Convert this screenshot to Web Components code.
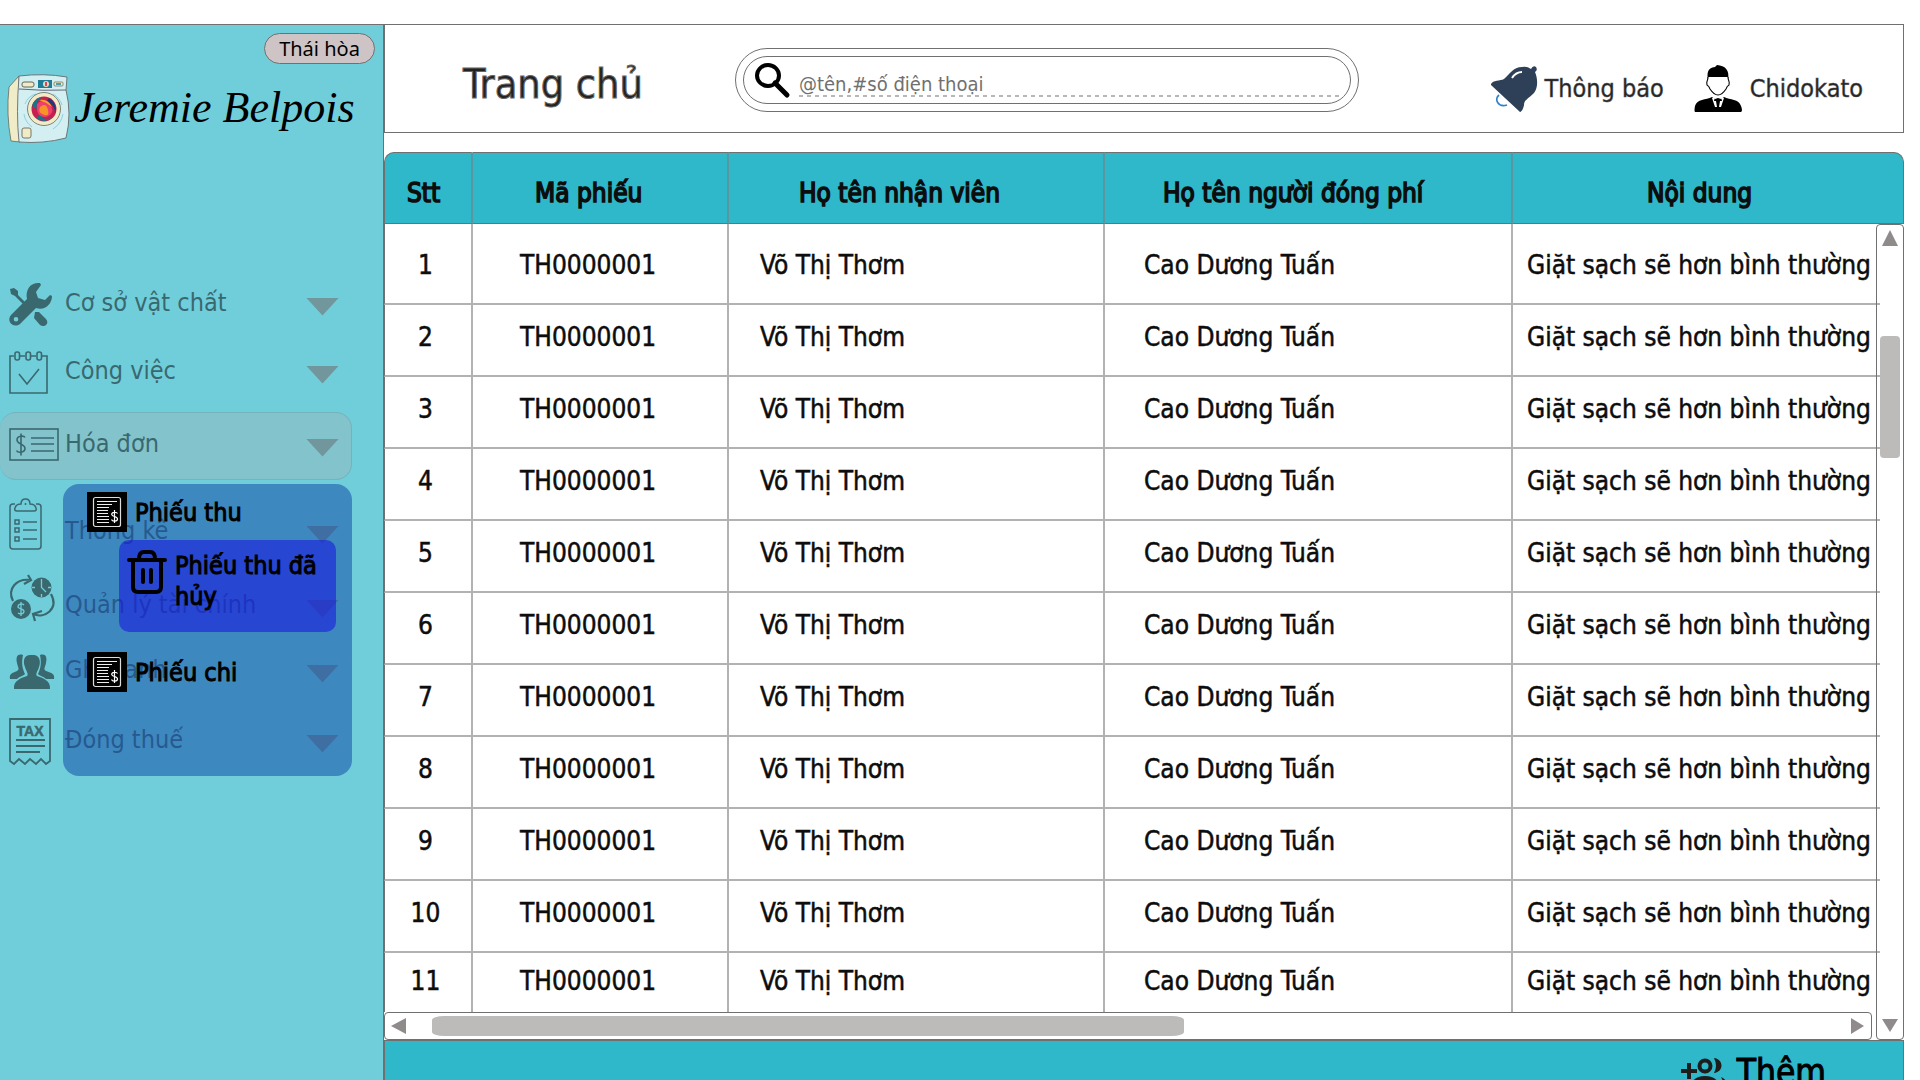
<!DOCTYPE html>
<html lang="vi">
<head>
<meta charset="utf-8">
<title>Trang chủ</title>
<style>
  body { margin: 0; background: #fff; overflow: hidden; font-family: "DejaVu Sans Condensed", "Noto Sans", sans-serif; color: #0d0d0d; }
</style>
</head>
<body>
<laundry-app></laundry-app>

<script>
const define = (name, html, setup) => {
  const tpl = document.createElement('template');
  tpl.innerHTML = html;
  customElements.define(name, class extends HTMLElement {
    connectedCallback() {
      if (this.shadowRoot) return;
      this.attachShadow({ mode: 'open' }).append(tpl.content.cloneNode(true));
      if (setup) setup(this, this.shadowRoot);
    }
  });
};

const dollar = (x, y, s) => `<path transform="translate(${x} ${y}) scale(${s})" d="M4 -7C3-9-4-9-4-4.500C-4 0 4-1 4 4C4 8-3 9-4.500 6M0-11V11" fill="none" stroke="currentColor" stroke-width="1.600"/>`;

const ICONS = {
  tools: [43, 43, `<path fill="currentColor" d="M31 0C22-1 16 6 18 16L2 32C-3 38 4 46 11 41L27 25C36 28 43 21 43 13L41 12L36 17L29 15L27 9L32 2ZM7 34a2.300 2.300 0 1 1 0 4.600a2.300 2.300 0 0 1 0-4.600Z" fill-rule="evenodd"/><path d="M1 6L5 5L9 8V12L18 21L16 23L6 13L2 11ZM26 29L30 29L37 36C41 41 35 45 31 42L25 35Z" fill="currentColor"/>`],
  calendar: [39, 43, `<g fill="none" stroke="currentColor" stroke-width="1.600"><path d="M5 5H1V42H38V5H33M11 5H16M22 5H27"/><rect x="6" y="1" width="4.500" height="8" rx="2"/><rect x="17" y="1" width="4.500" height="8" rx="2"/><rect x="28" y="1" width="4.500" height="8" rx="2"/><path d="M10 23L18 33L30 18"/></g>`],
  invoice: [50, 33, `<g fill="none" stroke="currentColor" stroke-width="1.600"><rect x="1" y="1" width="48" height="31"/><path d="M22 10H45M22 16H45M22 23H45"/></g>${dollar(12, 16.5, 1)}`],
  clipboard: [33, 52, `<g fill="none" stroke="currentColor" stroke-width="1.500"><path d="M6 6H4Q1 6 1 9V48Q1 51 4 51H29Q32 51 32 48V9Q32 6 29 6H27"/><path d="M8 13Q5 13 6 10Q7 6 12 6Q12 1 16.500 1T21 6Q26 6 27 10Q28 13 25 13Z"/><path d="M6 22h4v4h-4ZM6 30h4v4h-4ZM6 39h4v4h-4ZM14 24H28M14 32H28M14 41H28"/></g><circle cx="16.500" cy="6" r="1" fill="currentColor"/>`],
  finance: [46, 46, `<circle cx="12" cy="34" r="10" fill="currentColor"/><circle cx="32.500" cy="12.500" r="10" fill="currentColor"/><g fill="none" stroke="currentColor" stroke-width="2.200"><path d="M4 26C-2 14 7 3 22 5M15 9L22 5L19 0"/><path d="M42 19C50 34 36 44 24 39M33 36L24 39L26 46"/></g><g fill="none" stroke="#70cedb" stroke-width="1.300"><path d="M32.500 4V12.500L37 17M32.500 19v3M23 12.500h3M39 12.500h3"/><path d="M15 30C13 28 9 29 9 31.500C9 34.500 15 33 15 36.500C15 39 11 39.500 9 38M12 27V41"/></g>`],
  people: [46, 35, `<path fill="currentColor" d="M14 1C7-1 7 5 8 9C9 14 11 15 8 17C3 19 0 20 1 25H8C11 22 14 22 16 20C14 16 12 10 14 1ZM31 1C38-1 38 5 37 9C36 14 34 15 37 17C43 19 46 20 45 25H37C34 22 31 22 29 20C31 16 33 10 31 1Z"/><path fill="currentColor" d="M23 1C14 0 14 8 16 13C17 17 20 20 18 22C13 24 4 26 5 35H41C42 26 33 24 28 22C26 20 29 17 30 13C32 8 31 0 23 1Z"/>`],
  tax: [42, 48, `<path d="M1 43V1H41V43L37 46L32 41L27 46L21 41L16 46L10 41L5 46Z" fill="none" stroke="currentColor" stroke-width="1.800"/><path d="M7 22H36M7 28H36M7 34H31" stroke="currentColor" stroke-width="1.800"/><text x="21" y="17.500" text-anchor="middle" font-family="Liberation Sans, sans-serif" font-weight="700" font-size="14" fill="currentColor" stroke="currentColor" stroke-width=".5">TAX</text>`],
  receipt: [40, 40, `<rect width="40" height="40" fill="#000"/><rect x="6.500" y="5.500" width="27" height="29" rx="2" fill="none" stroke="#ddd" stroke-width="1.200"/><path d="M10 9.500H30M10 12.500H25M10 15.500H22M10 18.500H21M10 21.500H21M10 24.500H22M10 27.500H22M10 30.500H22" stroke="#eee" stroke-width="1"/><path d="M30.500 21.500C29.500 19.500 24.500 20 24.700 22.500C25 25 30.500 24 30.500 27C30.500 29.500 25.500 30 24.500 27.500M27.500 18V31" fill="none" stroke="#fff" stroke-width="1.200"/>`],
  trash: [40, 44, `<g fill="none" stroke="#000" stroke-width="4" stroke-linecap="round" stroke-linejoin="round"><path d="M2 10H38M6 11V37Q6 42 11 42H29Q34 42 34 37V11M12 9Q12 2 17 2H23Q28 2 28 9M16 20V32M24 20V32"/></g>`],
  search: [34, 34, `<ellipse cx="13" cy="12.500" rx="11" ry="10.500" fill="none" stroke="#000" stroke-width="4"/><path d="M20 20L32 32" stroke="#000" stroke-width="5" stroke-linecap="round"/>`],
  bell: [46, 46, `<path d="M8 29C3 33 7 42 16 39" fill="none" stroke="#2f80d0" stroke-width="1.800"/><path fill="#2e4057" d="M0 18C2 14 9 15 13 13C19 8 22 1 31 1Q36 0 40 3Q42-1 45 1Q47 4 44 6C47 13 47 22 43 27C37 33 33 34 33 39C32 44 30 46 29 46L0 19Z"/><path d="M21 12Q25 6 31 6" fill="none" stroke="#fff" stroke-width="2"/>`],
  person: [48, 47, `<path fill="#000" d="M14 16C13 8 13 3 21 2L23 0C31 1 36 4 34 16L33 12H15Z"/><path d="M14 12C14 17 12 15 13 20Q15 21 16 24Q20 30 24 30T32 24Q33 21 35 20C36 15 34 17 34 12" fill="#fff" stroke="#000" stroke-width="1.100"/><path fill="#000" d="M18 32C12 35 3 34 1 41Q0 46 1 47H47Q49 46 47 41C45 34 36 35 30 32L27 34L24 33L21 34Z"/><path fill="#fff" d="M18 33L21 32L20 36L22 36L23 42L21 42ZM30 33L27 32L28 36L26 36L25 42L27 42Z"/>`],
  add: [46, 46, `<g fill="none" stroke="#1d1d1d" stroke-width="4"><path d="M0 13H16M8 5V21"/><circle cx="24" cy="8" r="5.500"/><path d="M11 34Q11 20 24 20T38 34Z"/></g><path fill="#1d1d1d" d="M33 0C43 1 43 14 33 15Q37 8 33 0ZM40 19Q48 22 48 36H43Q44 26 40 19Z"/>`],
  washer: [62, 69, `<path d="M1 13L11 2L12 68L3 67Q-2 40 1 13Z" fill="#f1ecc8" stroke="#666a5c" stroke-width=".8"/><path d="M11 2Q36-1 59 3L58 16Q64 40 58 64Q35 70 11 68Q8 40 11 2Z" fill="#d3eff2" stroke="#666a6c" stroke-width=".9"/><path d="M11 15Q35 17 58 16" stroke="#667" fill="none"/><rect x="14" y="8" width="12" height="5" rx="2" fill="#f1ecc8" stroke="#665"/><rect x="30" y="6" width="14" height="8" fill="#1b7e96"/><circle cx="38" cy="10" r="3" fill="#e8dcc0"/><path d="M38 8v4" stroke="#d13" stroke-width="1.500"/><rect x="46" y="8" width="9" height="4" rx="1" fill="#f1ecc8" stroke="#665" stroke-width=".7"/><path d="M48 10h5" stroke="#189" stroke-width="1.500"/><g fill="none" stroke="#7cc8d4" stroke-width=".8"><path d="M17 30Q20 22 28 20M16 40Q17 48 24 53M45 20Q52 24 54 31M55 40Q53 50 45 55"/></g><circle cx="36" cy="35" r="16.500" fill="#f1ecc8" stroke="#666a5c" stroke-width=".8"/><circle cx="36" cy="35" r="12.500" fill="#c8204e"/><path d="M24 32A12.500 12.500 0 0 1 34 23Q27 28 29 35ZM28 44A12.500 12.500 0 0 0 44 44Q36 47 32 41Z" fill="#12768c"/><path d="M41 24A12.500 12.500 0 0 1 47 40Q47 30 38 28Z" fill="#243a78"/><path d="M29 30Q36 23 42 31T38 43Q28 44 29 30Z" fill="#ef3f6f"/><path d="M32 33Q38 28 40 36T34 40Q30 38 32 33Z" fill="#f79428"/><path d="M31 26Q40 24 44 33Q38 28 31 26Z" fill="#f6a42c"/><rect x="14" y="54" width="9" height="10" rx="2" fill="#f1ecc8" stroke="#776"/>`]
};

define('app-icon', `<style>:host{display:block;flex:none;line-height:0}svg{overflow:visible}</style>`, (el, root) => {
  const [w, h, body] = ICONS[el.getAttribute('name')];
  root.innerHTML += `<svg width="${w}" height="${h}" viewBox="0 0 ${w} ${h}" aria-hidden="true">${body}</svg>`;
});

define('nav-item', `
<style>
  :host { display: block; height: var(--h, 68px); box-sizing: border-box; }
  button { display: flex; align-items: center; width: 352px; height: 100%; padding: 0 12px 0 9px; border: 1px solid transparent; border-left: 0; border-radius: 0 16px 16px 0;
    background: none; font: inherit; font-size: 25px; line-height: 32px; color: #3a686f; text-align: left; }
  :host([active]) { margin: 7px 0 0; }
  :host([active]) button { padding-bottom: 4px; background: #83c3cc; border-color: #75b3bc; border-radius: 16px; }
  .icon { width: 56px; padding-top: 3px; }
  :host([active]) .icon { padding: 0; }
  :host([raised]) .icon { padding: 0 0 14px; }
  .label { flex: 1; }
  .arrow { width: 33px; height: 18px; margin-top: 7px; background: #71969b; clip-path: polygon(0 0, 100% 0, 50% 100%); }
</style>
<button type="button"><span class="icon"></span><span class="label"><slot></slot></span><span class="arrow"></span></button>`, (el, root) => {
  root.querySelector('.icon').innerHTML = `<app-icon name="${el.getAttribute('icon')}"></app-icon>`;
});

define('sub-menu', `
<style>
  :host { display: flex; flex-direction: column; box-sizing: border-box; height: 292px; padding: 8px 16px 0 24px; border-radius: 16px; background: rgba(21,79,170,.55); }
  button { display: flex; align-items: center; gap: 8px; padding: 0; border: 0; background: none; font: inherit; font-size: 25px; line-height: 31px; color: #000; text-align: left; -webkit-text-stroke: 1px #000; }
  .nested { align-items: flex-start; gap: 8px; height: 92px; margin: 8px 0 20px 32px; padding: 10px 8px; border-radius: 10px; background: rgba(25,26,222,.6); }
</style>
<button type="button"><app-icon name="receipt"></app-icon>Phiếu thu</button>
<button type="button" class="nested"><app-icon name="trash"></app-icon>Phiếu thu đã hủy</button>
<button type="button"><app-icon name="receipt"></app-icon>Phiếu chi</button>`);

define('side-bar', `
<style>
  :host { display: block; position: relative; box-sizing: border-box; background: #70cedb; border: 1px solid #707070; border-width: 1px 1px 0 0; }
  .branch { display: block; margin: 8px 8px 0 auto; width: 111px; height: 31px; padding: 0; border: 1px solid #707070; border-radius: 16px; background: #cec4c5; font: 20px/28px "Noto Sans", sans-serif; color: #000; }
  .brand { display: flex; align-items: center; gap: 4px; height: 88px; padding: 0 8px; margin-bottom: 117px; color: #000; text-decoration: none; font: italic 44px/56px "Liberation Serif", serif; white-space: nowrap; }
  sub-menu { position: absolute; left: 63px; top: 459px; width: 289px; }
</style>
<button class="branch" type="button">Thái hòa</button>
<a class="brand" href="#"><app-icon name="washer"></app-icon>Jeremie Belpois</a>
<nav>
  <nav-item icon="tools">Cơ sở vật chất</nav-item>
  <nav-item icon="calendar">Công việc</nav-item>
  <nav-item icon="invoice" active>Hóa đơn</nav-item>
  <nav-item icon="clipboard" raised style="--h:102px">Thống kê</nav-item>
  <nav-item icon="finance" raised style="--h:46px">Quản lý tài chính</nav-item>
  <nav-item icon="people" style="--h:84px">Ghi danh</nav-item>
  <nav-item icon="tax" style="--h:56px">Đóng thuế</nav-item>
</nav>
<sub-menu></sub-menu>`);

define('search-box', `
<style>
  :host { display: block; box-sizing: border-box; padding: 7px; border: 1px solid #707070; border-radius: 32px; }
  label { display: flex; align-items: center; gap: 10px; box-sizing: border-box; height: 48px; padding: 0 11px; border: 1px solid #707070; border-radius: 24px; }
  input { flex: 1; min-width: 0; height: 34px; box-sizing: border-box; padding: 8px 0 0; border: 0; outline: 0; font: inherit; font-size: 20px;
    background: repeating-linear-gradient(90deg, #b7b7b7 0 4px, transparent 4px 8px) bottom / 100% 2px no-repeat; }
  input::placeholder { color: #707070; opacity: 1; }
</style>
<label><app-icon name="search"></app-icon><input type="search" aria-label="Tìm kiếm" placeholder="@tên,#số điện thoại"></label>`);

define('top-bar', `
<style>
  :host { display: flex; align-items: center; box-sizing: border-box; height: 109px; padding: 0 40px 0 78px; border: 1px solid #707070; }
  h1 { flex: none; width: 272px; margin: 10px 0 0; font-size: 41px; line-height: 48px; font-weight: 400; color: #222; -webkit-text-stroke: 1px #666; }
  search-box { flex: 0 1 624px; margin-top: 3px; }
  nav { display: flex; gap: 30px; margin: 20px 0 0 auto; }
  a { display: flex; align-items: center; gap: 8px; font-size: 25px; line-height: 32px; color: #222; text-decoration: none; white-space: nowrap; -webkit-text-stroke: 0.5px #555; }
</style>
<h1>Trang chủ</h1>
<search-box></search-box>
<nav>
  <a href="#"><app-icon name="bell"></app-icon>Thông báo</a>
  <a href="#"><app-icon name="person"></app-icon>Chidokato</a>
</nav>`);

define('scroll-bar', `
<style>
  :host { display: flex; align-items: center; justify-content: space-between; box-sizing: border-box; border: 1px solid #707070; border-radius: 4px; background: #fff; }
  :host([vertical]) { flex-direction: column; background: linear-gradient(90deg, transparent 3px, #fff 3px); }
  button { flex: none; padding: 0; border: 0; background: #8f8b8a; width: 15px; height: 16px; }
  .back { clip-path: polygon(0 50%, 100% 0, 100% 100%); margin-left: 6px; }
  .next { clip-path: polygon(0 0, 100% 50%, 0 100%); margin-right: 7px; width: 13px; }
  .track { flex: 1; align-self: stretch; margin: 3px 26px; }
  .thumb { width: 54%; height: 100%; border-radius: 12px / 4px; background: #bcbbba; }
  :host([vertical]) .back { clip-path: polygon(50% 0, 100% 100%, 0 100%); width: 16px; margin: 5px 0 0; }
  :host([vertical]) .next { clip-path: polygon(0 0, 100% 0, 50% 100%); width: 16px; height: 13px; margin: 0 0 7px; }
  :host([vertical]) .track { margin: 90px 3px 0; }
  :host([vertical]) .thumb { width: 100%; height: 122px; border-radius: 4px; }
</style>
<button class="back" type="button" aria-label="Lùi"></button>
<div class="track"><div class="thumb"></div></div>
<button class="next" type="button" aria-label="Tiếp"></button>`);

define('receipt-table', `
<style>
  :host { display: grid; grid-template: 72px auto 28px / 1fr 28px; }
  table { grid-area: 1 / 1 / 3 / 3; width: 100%; table-layout: fixed; border-collapse: separate; border-spacing: 0; font-size: 26px; line-height: 32px; }
  col:nth-child(1) { width: 89px; } col:nth-child(2) { width: 256px; } col:nth-child(3) { width: 376px; } col:nth-child(4) { width: 408px; }
  th, td { box-sizing: border-box; padding: 0 0 6px; text-align: left; font-weight: 400; white-space: nowrap; border-right: 2px solid #b2b2b2; }
  th:first-child { border-left: 1px solid #707070; }
  thead th { height: 72px; padding: 10px 0 0 22px; background: #2fb8ca; border-right-color: #58979f; border-top: 1px solid #707070; border-bottom: 1px solid #707070; -webkit-text-stroke: 1.500px #0d0d0d; }
  thead th:first-child { border-top-left-radius: 10px; }
  thead th:last-child { border-right: 1px solid #707070; border-top-right-radius: 10px; }
  thead th:nth-child(2) { padding-left: 62px; }
  thead th:nth-child(3) { padding-left: 70px; }
  thead th:nth-child(4) { padding-left: 58px; }
  thead th:nth-child(5) { padding-left: 134px; }
  tbody td, tbody th { height: 72px; border-bottom: 2px solid #b2b2b2; -webkit-text-stroke: 0.500px #0d0d0d; }
  tbody td:last-child { border-right: 0; }
  tbody tr:first-child > * { height: 81px; padding-top: 2px; padding-bottom: 0; }
  tbody tr:last-child > * { height: 59px; border-bottom: 0; padding-bottom: 4px; }
  tbody th { text-align: center; padding-right: 5px; }
  tbody td:nth-child(2) { padding-left: 47px; }
  tbody td:nth-child(3) { padding-left: 31px; }
  tbody td:nth-child(4) { padding-left: 39px; }
  tbody td:nth-child(5) { padding-left: 14px; }
  .v { grid-area: 2 / 2 / 4 / 3; }
  .h { grid-area: 3 / 1; margin-right: 4px; }
</style>
<table>
  <colgroup><col><col><col><col><col></colgroup>
  <thead><tr><th scope="col">Stt</th><th scope="col">Mã phiếu</th><th scope="col">Họ tên nhận viên</th><th scope="col">Họ tên người đóng phí</th><th scope="col">Nội dung</th></tr></thead>
  <tbody></tbody>
</table>
<scroll-bar class="v" vertical></scroll-bar>
<scroll-bar class="h"></scroll-bar>`, (el, root) => {
  root.querySelector('tbody').innerHTML = Array.from({ length: 11 }, (_, i) =>
    `<tr><th scope="row">${i + 1}</th><td>TH0000001</td><td>Võ Thị Thơm</td><td>Cao Dương Tuấn</td><td>Giặt sạch sẽ hơn bình thường</td></tr>`).join('');
});

define('action-bar', `
<style>
  :host { display: flex; justify-content: flex-end; box-sizing: border-box; height: 80px; padding: 9px 77px 0 0; background: #2fb8ca; border: 1px solid #707070; }
  button { display: flex; align-items: flex-start; gap: 10px; padding: 0; border: 0; background: none; font: inherit; font-size: 35px; line-height: 44px; color: #000; -webkit-text-stroke: 1px #000; }
  app-icon { margin-top: 8px; }
</style>
<button type="button"><app-icon name="add"></app-icon>Thêm</button>`);

define('laundry-app', `
<style>
  :host { display: grid; grid-template-columns: 384px 1fr; height: 100vh; box-sizing: border-box; padding: 24px 16px 0 0; overflow: hidden; }
  main { display: flex; flex-direction: column; min-width: 0; }
  receipt-table { margin-top: 19px; }
  main > * { flex: none; }
</style>
<side-bar></side-bar>
<main>
  <top-bar></top-bar>
  <receipt-table></receipt-table>
  <action-bar></action-bar>
</main>`);
</script>
</body>
</html>
